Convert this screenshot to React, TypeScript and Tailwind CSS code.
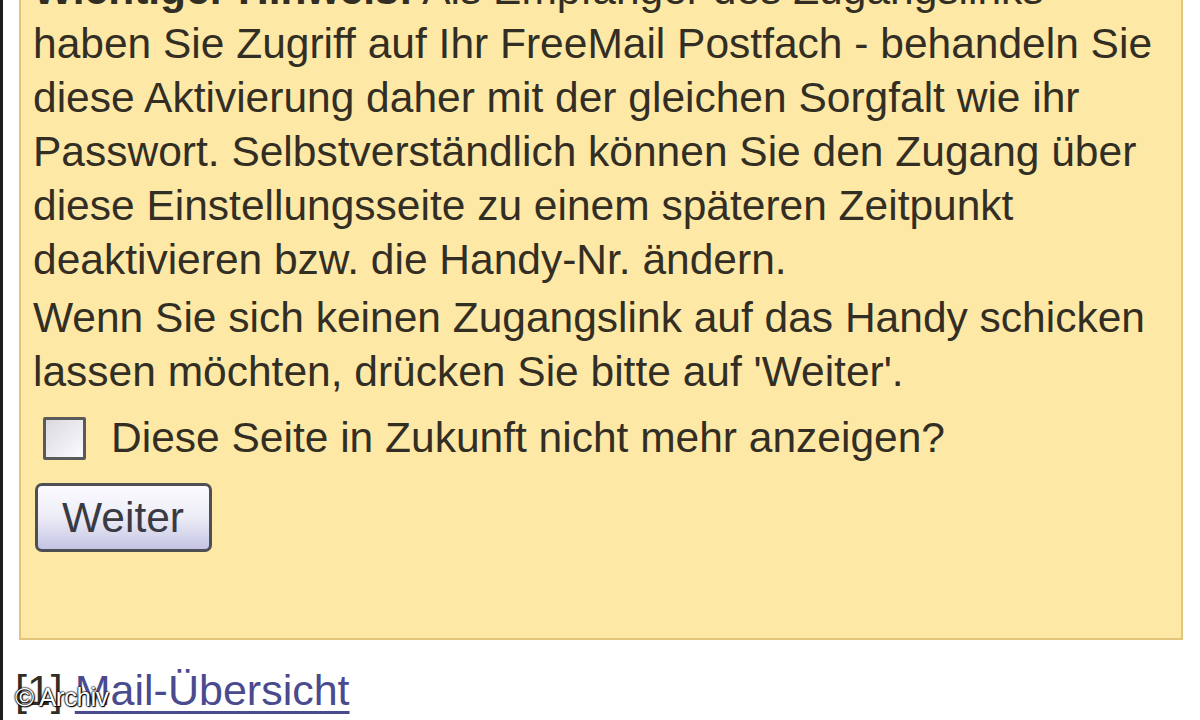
import React from "react"

const font = { fontFamily: '"Liberation Sans", Arial, sans-serif' }

export default function App() {
  return (
    <div className="relative h-[720px] w-[1200px] overflow-hidden border-l-[3px] border-[#1e1e1e] bg-white text-[#332e24]" style={font}>
      <div className="-mt-[40px] ml-[16px] w-[1164px] border-2 border-[#e2c67c] bg-[#fde8a6] pl-[12px] pb-[86px] pt-[1px] text-[42.5px] leading-[54px]">
        <p>
          <b>Wichtiger Hinweis:</b> Als Empfänger des Zugangslinks<br />
          haben Sie Zugriff auf Ihr FreeMail Postfach - behandeln Sie<br />
          diese Aktivierung daher mit der gleichen Sorgfalt wie ihr<br />
          Passwort. Selbstverständlich können Sie den Zugang über<br />
          diese Einstellungsseite zu einem späteren Zeitpunkt<br />
          deaktivieren bzw. die Handy-Nr. ändern.
        </p>
        <p className="mt-[4px]">
          Wenn Sie sich keinen Zugangslink auf das Handy schicken<br />
          lassen möchten, drücken Sie bitte auf 'Weiter'.
        </p>
        <label className="mt-[12px] flex items-center">
          <span className="ml-[10px] h-[43px] w-[43px] rounded-[2px] border-[3px] border-[#5a5a5a] bg-gradient-to-br from-[#d9d9df] to-[#fbfbff]" />
          <span className="ml-[25px]">Diese Seite in Zukunft nicht mehr anzeigen?</span>
        </label>
        <button className="mt-[18px] ml-[2px] flex h-[69px] w-[177px] items-center rounded-[7px] border-[3px] border-[#4e4e55] bg-gradient-to-b from-[#fbfbff] via-[#ececf6] to-[#c4c4e4] pl-[24px] text-[#3a3a44]">
          Weiter
        </button>
      </div>
      <div className="mt-[23px] ml-[12px] text-[43px] leading-[54px]">
        [1] <span className="text-[#4a4a8e] underline decoration-[3px] underline-offset-[6px]">Mail-Übersicht</span>
      </div>
      <div className="absolute left-[12px] top-[678px] text-[26px] tracking-[-0.5px] text-white [text-shadow:0_0_2px_#000,0_0_2px_#000,0_0_1px_#000,1px_1px_1px_#000]">
        © Archiv
      </div>
    </div>
  )
}
